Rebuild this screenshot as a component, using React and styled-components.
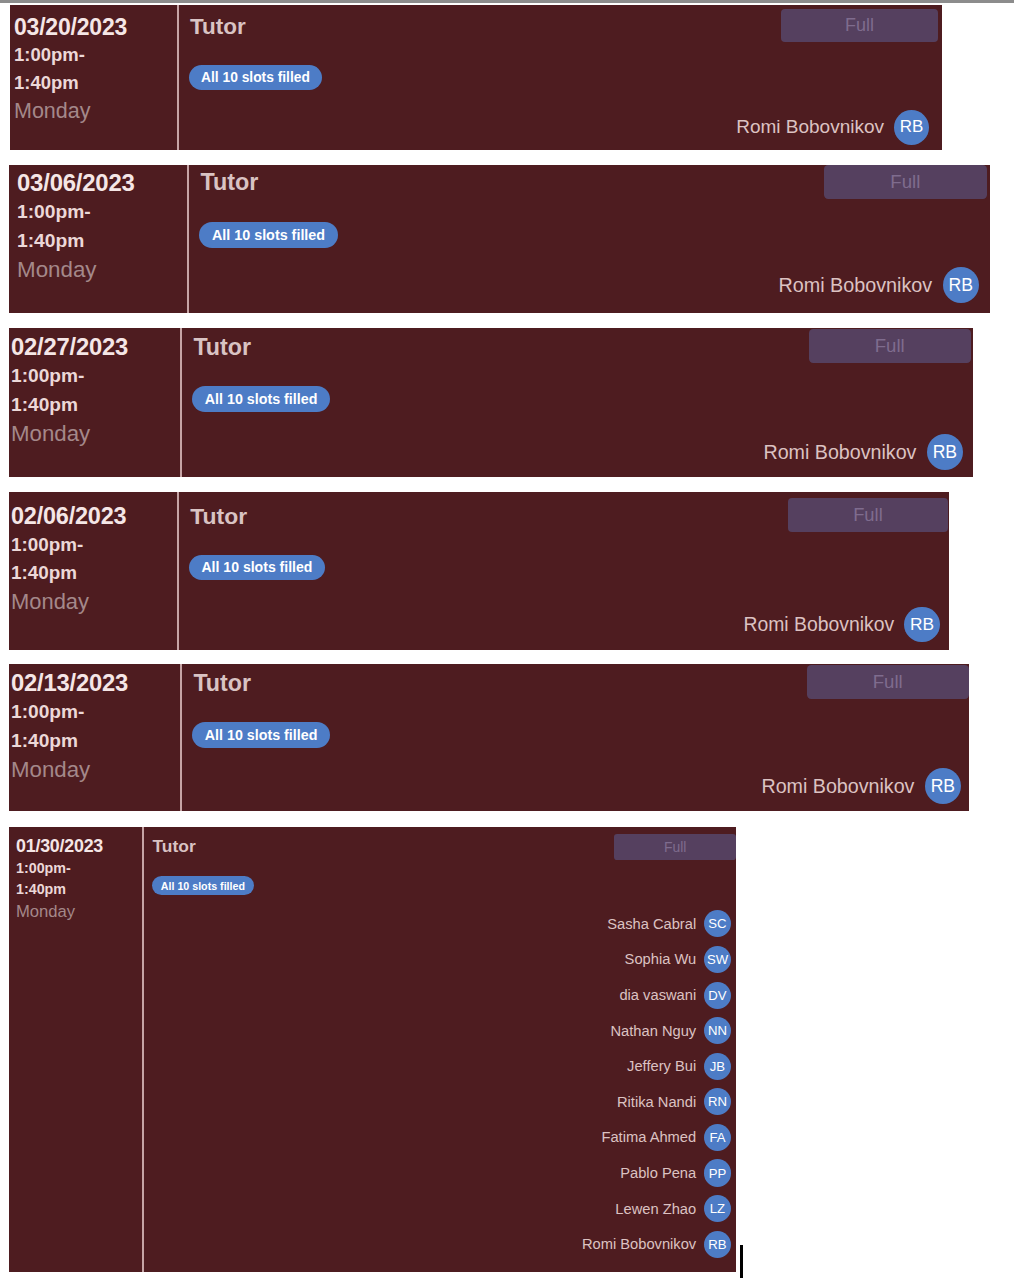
import React from 'react';
import styled, { createGlobalStyle } from 'styled-components';

const GlobalStyle = createGlobalStyle`
  html, body {
    margin: 0;
    padding: 0;
    background: #ffffff;
    font-family: "Liberation Sans", Arial, Helvetica, sans-serif;
  }
`;

const Page = styled.div`
  width: 1014px;
  min-height: 1280px;
  background: #ffffff;
  border-top: 3px solid #8c8c8c;
  box-sizing: border-box;
`;

const Slot = styled.div`
  display: flex;
  align-items: flex-end;
  margin-top: ${(p) => p.mt}px;
  margin-left: ${(p) => p.ml}px;
`;

const Card = styled.div`
  display: flex;
  width: ${(p) => p.w}px;
  height: ${(p) => p.h}px;
  background: #4e1c20;
  box-sizing: border-box;
`;

const DateCol = styled.div`
  width: ${(p) => p.lw}px;
  flex-shrink: 0;
  box-sizing: border-box;
  border-right: ${(p) => Math.max(1, Math.round(2 * p.s))}px solid #c6a4a5;
  padding-top: ${(p) => p.pt}px;
  padding-left: ${(p) => p.pl}px;
  line-height: ${(p) => 28 * p.s}px;
`;

const DateText = styled.div`
  font-size: ${(p) => 23 * p.s}px;
  font-weight: 700;
  color: #f5e6e6;
  letter-spacing: -0.2px;
`;

const TimeText = styled.div`
  font-size: ${(p) => 18.5 * p.s}px;
  font-weight: 700;
  color: #ecd8d8;
`;

const DayText = styled.div`
  font-size: ${(p) => 21.5 * p.s}px;
  color: #a4888a;
`;

const Body = styled.div`
  flex: 1;
  display: flex;
  min-width: 0;
`;

const Info = styled.div`
  flex: 1;
  padding-top: ${(p) => p.pt}px;
  padding-left: ${(p) => 11 * p.s}px;
`;

const Title = styled.div`
  font-size: ${(p) => 22.5 * p.s}px;
  line-height: ${(p) => 28 * p.s}px;
  font-weight: 700;
  color: #d9c3c3;
`;

const Badge = styled.span`
  display: inline-flex;
  align-items: center;
  height: ${(p) => 25 * p.s}px;
  margin-top: ${(p) => 23.5 * p.s}px;
  margin-left: -1px;
  padding: 0 ${(p) => 12 * p.s}px;
  border-radius: ${(p) => 13 * p.s}px;
  background: #4d7cc6;
  color: #ffffff;
  font-size: ${(p) => 13.8 * p.s}px;
  font-weight: 700;
`;

const Side = styled.div`
  display: flex;
  flex-direction: column;
  align-items: flex-end;
  padding-top: ${(p) => p.top}px;
  padding-bottom: ${(p) => p.pb}px;
`;

const FullButton = styled.div`
  display: flex;
  align-items: center;
  justify-content: center;
  width: ${(p) => 157 * p.s}px;
  height: ${(p) => 33 * p.s}px;
  margin-right: ${(p) => p.right}px;
  border-radius: ${(p) => 4 * p.s}px;
  background: #55405f;
  color: #7f6c8e;
  font-size: ${(p) => 18 * p.s}px;
`;

const NameList = styled.div`
  margin-top: auto;
  margin-right: ${(p) => p.right}px;
  display: flex;
  flex-direction: column;
  align-items: flex-end;
`;

const NameRow = styled.div`
  display: flex;
  align-items: center;
  justify-content: flex-end;
  height: ${(p) => 46 * p.s}px;
  gap: ${(p) => 10 * p.s}px;
`;

const Name = styled.span`
  font-size: ${(p) => 19 * p.s}px;
  color: #dcc2c2;
  white-space: nowrap;
`;

const Avatar = styled.span`
  display: flex;
  align-items: center;
  justify-content: center;
  width: ${(p) => 35 * p.s}px;
  height: ${(p) => 35 * p.s}px;
  border-radius: 50%;
  background: #4d7cc6;
  color: #ffffff;
  font-size: ${(p) => 17 * p.s}px;
`;

const Caret = styled.div`
  width: 3px;
  height: 33px;
  margin-left: 4px;
  margin-bottom: -6px;
  background: #000000;
`;

const romi = [['Romi Bobovnikov', 'RB']];

const cards = [
  { date: '03/20/2023', s: 1, w: 932, h: 145, lw: 169, ml: 10, mt: 2, pt: 8, pl: 4, top: 4, right: 4, pb: 0, ar: 13, names: romi },
  { date: '03/06/2023', s: 1.04, w: 981, h: 148, lw: 180, ml: 9, mt: 15, pt: 3, pl: 8, top: 0, right: 3, pb: 4, ar: 11, names: romi },
  { date: '02/27/2023', s: 1.035, w: 964, h: 149, lw: 173, ml: 9, mt: 15, pt: 5, pl: 2, top: 1, right: 2, pb: 1, ar: 10, names: romi },
  { date: '02/06/2023', s: 1.02, w: 940, h: 158, lw: 170, ml: 9, mt: 15, pt: 10, pl: 2, top: 6, right: 1, pb: 2, ar: 9, names: romi },
  { date: '02/13/2023', s: 1.035, w: 960, h: 147, lw: 173, ml: 9, mt: 14, pt: 5, pl: 2, top: 1, right: 0, pb: 1, ar: 8, names: romi },
  {
    date: '01/30/2023', s: 0.774, w: 727, h: 445, lw: 135, ml: 9, mt: 16, pt: 9, pl: 7, top: 7, right: 0, pb: 10, ar: 5, caret: true,
    names: [
      ['Sasha Cabral', 'SC'],
      ['Sophia Wu', 'SW'],
      ['dia vaswani', 'DV'],
      ['Nathan Nguy', 'NN'],
      ['Jeffery Bui', 'JB'],
      ['Ritika Nandi', 'RN'],
      ['Fatima Ahmed', 'FA'],
      ['Pablo Pena', 'PP'],
      ['Lewen Zhao', 'LZ'],
      ['Romi Bobovnikov', 'RB'],
    ],
  },
];

function SessionCard({ c }) {
  return (
    <Slot mt={c.mt} ml={c.ml}>
      <Card w={c.w} h={c.h}>
        <DateCol s={c.s} lw={c.lw} pt={c.pt} pl={c.pl}>
          <DateText s={c.s}>{c.date}</DateText>
          <TimeText s={c.s}>1:00pm-</TimeText>
          <TimeText s={c.s}>1:40pm</TimeText>
          <DayText s={c.s}>Monday</DayText>
        </DateCol>
        <Body>
          <Info s={c.s} pt={c.pt}>
            <Title s={c.s}>Tutor</Title>
            <Badge s={c.s}>All 10 slots filled</Badge>
          </Info>
          <Side top={c.top} pb={c.pb}>
            <FullButton s={c.s} right={c.right}>Full</FullButton>
            <NameList right={c.ar}>
              {c.names.map(([name, initials]) => (
                <NameRow key={name} s={c.s}>
                  <Name s={c.s}>{name}</Name>
                  <Avatar s={c.s}>{initials}</Avatar>
                </NameRow>
              ))}
            </NameList>
          </Side>
        </Body>
      </Card>
      {c.caret && <Caret />}
    </Slot>
  );
}

export default function App() {
  return (
    <>
      <GlobalStyle />
      <Page>
        {cards.map((c) => (
          <SessionCard key={c.date} c={c} />
        ))}
      </Page>
    </>
  );
}
